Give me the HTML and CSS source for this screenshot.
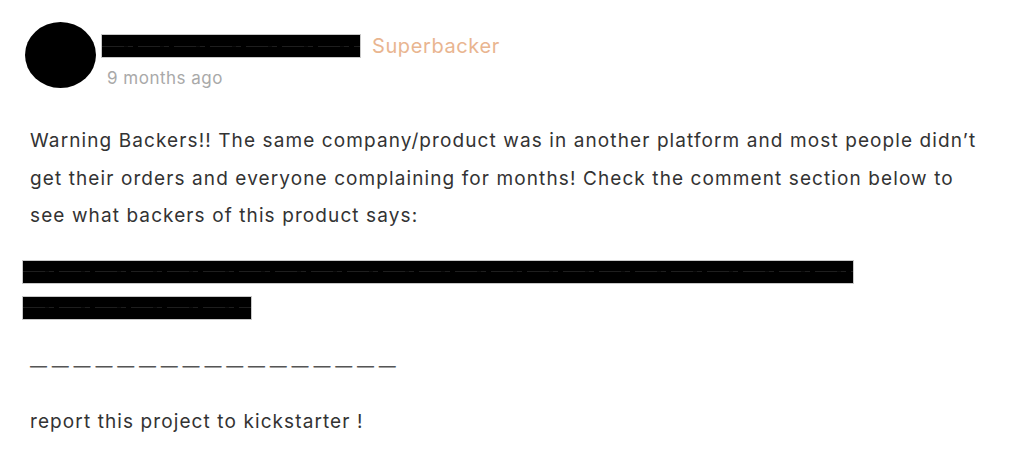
FILE: index.html
```html
<!DOCTYPE html>
<html>
<head>
<meta charset="utf-8">
<link rel="stylesheet" href="styles.css">
</head>
<body>
<div class="comment">
  <div class="header">
    <div class="avatar"></div>
    <div class="meta">
      <div class="name-row">
        <span class="redact name-redact"><span class="redact-line"></span></span>
        <span class="badge">Superbacker</span>
      </div>
      <div class="time">9 months ago</div>
    </div>
  </div>
  <div class="body">
    <p class="text">Warning Backers!! The same company/product was in another platform and most people didn’t get their orders and everyone complaining for months! Check the comment section below to see what backers of this product says:</p>
    <div class="redact-block">
      <span class="redact bar-long"><span class="redact-line"></span></span>
      <span class="redact bar-short"><span class="redact-line"></span></span>
    </div>
    <p class="text dashes">—————————————————</p>
    <p class="text report">report this project to kickstarter !</p>
  </div>
</div>
</body>
</html>
```

FILE: styles.css
```css
html, body {
  margin: 0;
  padding: 0;
  background: #ffffff;
}
body {
  font-family: Inter, "Noto Sans", sans-serif;
  color: #333333;
  width: 1024px;
  height: 460px;
  overflow: hidden;
}
.comment {
  padding: 22px 0 0 25px;
}
.header {
  display: flex;
  align-items: flex-start;
  gap: 5px;
}
.avatar {
  width: 71px;
  height: 66px;
  border-radius: 50%;
  background: #000;
  flex-shrink: 0;
}
.meta {
  display: flex;
  flex-direction: column;
  padding-top: 12px;
}
.name-row {
  display: flex;
  align-items: center;
  gap: 11px;
}
.redact {
  display: flex;
  align-items: center;
  background: #000;
  border: 1px solid #c8c8c8;
  box-sizing: border-box;
  height: 24px;
}
.redact-line {
  display: block;
  width: 100%;
  height: 1px;
  background: repeating-linear-gradient(90deg, #1e1e1e 0 22px, #0c0c0c 22px 26px, #1e1e1e 26px 31px, transparent 31px 36px);
}
.name-redact {
  width: 260px;
}
.badge {
  color: #e9b590;
  font-size: 20px;
  letter-spacing: 0.6px;
  line-height: 24px;
}
.time {
  color: #a9a9a9;
  font-size: 17px;
  letter-spacing: 0.5px;
  line-height: 20px;
  margin-top: 10px;
  padding-left: 6px;
}
.body {
  padding-left: 5px;
  margin-top: 34px;
}
.text {
  margin: 0;
  font-size: 19px;
  letter-spacing: 1.1px;
  line-height: 37.5px;
  width: 952px;
}
.redact-block {
  display: flex;
  flex-direction: column;
  gap: 12px;
  margin: 25px 0 0 -8px;
}
.bar-long {
  width: 832px;
}
.bar-short {
  width: 230px;
}
.dashes {
  color: #555;
  font-size: 17px;
  letter-spacing: 4.8px;
  margin-top: 28px;
}
.report {
  margin-top: 18px;
}
```
